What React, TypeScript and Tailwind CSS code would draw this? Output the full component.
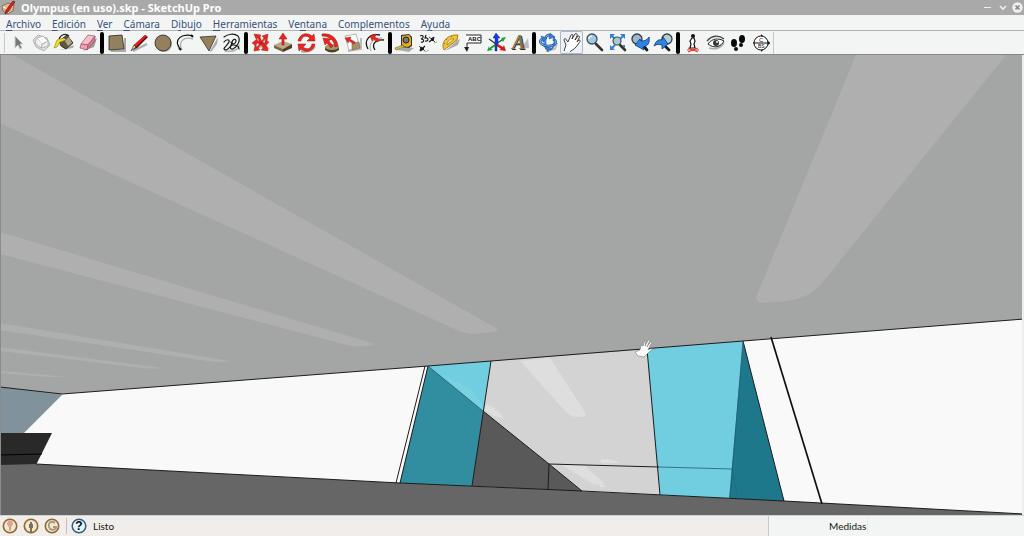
import { useState } from "react";
import type { ReactNode } from "react";
import clsx from "clsx";

interface Tool {
  name: string;
  icon: ReactNode;
}

interface MenuEntry {
  label: string;
  /** Index of the underlined access key, -1 for none */
  hotkey: number;
}

const MENUS: MenuEntry[] = [
  { label: "Archivo", hotkey: 0 },
  { label: "Edición", hotkey: 0 },
  { label: "Ver", hotkey: 0 },
  { label: "Cámara", hotkey: 0 },
  { label: "Dibujo", hotkey: 1 },
  { label: "Herramientas", hotkey: 0 },
  { label: "Ventana", hotkey: 2 },
  { label: "Complementos", hotkey: -1 },
  { label: "Ayuda", hotkey: 1 },
];

const TOOL_GROUPS: Tool[][] = [
  [
    {
      name: "Seleccionar",
      icon: <path d="M8 5v12l3-3 2 4 2-1-2-4h3z" fill="#777" stroke="#cfcfcf" />,
    },
    {
      name: "Crear componente",
      icon: (
        <g stroke="#b4b4b4" strokeLinejoin="round">
          <path d="M3 9l5-5 9 3 3 7-6 6-8-4z" fill="#dcdcdc" />
          <path d="M7 7l6-2 5 5-6 3z" fill="#fff" />
          <path d="M7 7l-2 5 6 5 1-4M11 17l7-2v-5" fill="#f2f2f2" />
        </g>
      ),
    },
    {
      name: "Pintar",
      icon: (
        <>
          <path d="M7 19l13-2 1-3-8 3z" fill="#aaa" />
          <path d="M6 10l8-6 6 8-7 6-5-3z" fill="#5d5745" stroke="#1c1a15" strokeWidth=".8" />
          <path d="M12 10l4-4 3 6-4 3z" fill="#b2a684" />
          <path d="M6 8C8 3 13 2 16 5" fill="none" stroke="#222" strokeWidth="1.2" />
          <path d="M11 7L4 9 1 17l3-1 3-5 6-2z" fill="#f4df1d" stroke="#8d7c10" strokeWidth=".6" />
        </>
      ),
    },
    {
      name: "Borrar",
      icon: (
        <g strokeLinejoin="round">
          <path d="M7 20l11-4 3-9-8 7z" fill="#9b9b9b" />
          <g stroke="#9c5263" strokeWidth=".7">
            <path d="M12 4l7 1-7 9-7-1z" fill="#f9bcc9" />
            <path d="M5 13l7 1-1 5-7-2z" fill="#f0a0b2" />
            <path d="M12 14l7-9v5l-8 9z" fill="#d4788c" />
          </g>
        </g>
      ),
    },
  ],
  [
    {
      name: "Rectángulo",
      icon: (
        <>
          <path d="M6 20h14V7" stroke="#aaa" fill="none" strokeWidth="2" />
          <path d="M4 5l13-1 2 14-15 1z" fill="#92805f" stroke="#2a241a" strokeWidth=".8" />
        </>
      ),
    },
    {
      name: "Línea",
      icon: (
        <>
          <path d="M5 20l14-7" stroke="#aaa" strokeWidth="2" />
          <path d="M4 19l2-5L17 4l3 2L9 17z" fill="#4a0d0a" />
          <path d="M6 14L17 4l2 1L8 16z" fill="#ea1f1a" />
          <path d="M3 20l3-6 2 2z" fill="#f1dcae" stroke="#222" strokeWidth=".6" />
        </>
      ),
    },
    {
      name: "Círculo",
      icon: (
        <>
          <circle cx="13" cy="13" r="8" fill="#aaa" />
          <circle cx="12" cy="12" r="8" fill="#92805f" stroke="#2a241a" strokeWidth=".8" />
        </>
      ),
    },
    {
      name: "Arco",
      icon: (
        <>
          <path d="M8 19C4 11 9 5 19 8" fill="none" stroke="#b0b0b0" strokeWidth="1.4" />
          <path d="M6 18C-1 8 8 2 19 5" fill="none" stroke="#111" strokeWidth="1.2" />
          <path d="M17 4l2 2M5 17l2 2" stroke="#111" strokeWidth="1.8" />
        </>
      ),
    },
    {
      name: "Polígono",
      icon: (
        <>
          <path d="M13 20L21 6l-1 7-6 8z" fill="#aaa" />
          <path d="M3 6l16-1-7 15z" fill="#92805f" stroke="#3c3324" strokeWidth=".8" />
        </>
      ),
    },
    {
      name: "A mano alzada",
      icon: (
        <g fill="none" strokeLinecap="round">
          <path d="M5 20c6 1 13 0 14-6" stroke="#b5b5b5" strokeWidth="1.6" />
          <path
            d="M4 6c4-3 10-4 14-1 3 4 0 10-5 13-4 1-3-4 0-4 4 0 6 2 6 4M4 11c2-3 6-3 5 0s-5 5-5 7c2 3 7-2 8-6 0-4 4-5 4-2s-4 4-5 1"
            stroke="#161616"
            strokeWidth="1.2"
          />
        </g>
      ),
    },
  ],
  [
    {
      name: "Mover",
      icon: (
        <>
          <path d="M5 19l8-4 7 3" stroke="#bbb" strokeWidth="2" fill="none" />
          <g fill="#ee241f" stroke="#8e1613" strokeWidth=".4">
            <path d="M3 12l5-4 1 2 3 1-1 2-3-1-1 3z" />
            <path d="M20 11l-4 5-1-2-4-1 1-2 4 1v-3z" />
            <path d="M5 3l7 1-1 2 2 5-2 1-2-5-2 1z" />
            <path d="M19 3l-6 2 2 2-3 4 1 1 3-4 2 2z" />
            <path d="M5 20l1-6 2 2 3-4 2 1-4 4 2 2z" />
            <path d="M19 20l-7-1 2-2-2-4 2-1 2 4 2-1z" />
          </g>
        </>
      ),
    },
    {
      name: "Empujar/tirar",
      icon: (
        <>
          <path d="M2 14l9-4 9 3-9 5z" fill="#bba886" />
          <path d="M2 14l9 4v3l-9-4z" fill="#7c6848" />
          <path d="M11 18l9-5v4l-9 4z" fill="#4b3d28" />
          <path d="M10 14V8H7l4-6 4 6h-3v6z" fill="#ee241f" stroke="#8e1613" strokeWidth=".5" />
        </>
      ),
    },
    {
      name: "Girar",
      icon: (
        <>
          <path d="M6 20c5 2 12 0 14-5" stroke="#aaa" strokeWidth="2" fill="none" />
          <path d="M3 10C5 2 12 1 17 5l2-2 1 7h-8l3-3C11 4 7 5 6 10z" fill="#ee241f" stroke="#8e1613" strokeWidth=".5" />
          <path d="M20 13c-2 8-9 9-14 5l-2 2-1-7h8l-3 3c4 3 8 2 9-3z" fill="#ee241f" stroke="#8e1613" strokeWidth=".5" />
        </>
      ),
    },
    {
      name: "Sígueme",
      icon: (
        <>
          <path d="M7 16h14v3q-7 5-14 0z" fill="#4f4028" />
          <ellipse cx="14" cy="16" rx="7" ry="3" fill="#a8946d" />
          <path d="M4 3c9-1 15 4 16 12l-3 1C16 9 11 5 4 5z" fill="#ee241f" stroke="#8e1613" strokeWidth=".5" />
          <path d="M5 7l8 1-2 2 4 5-2 2-4-5-2 2z" fill="#ee241f" stroke="#8e1613" strokeWidth=".5" />
        </>
      ),
    },
    {
      name: "Escala",
      icon: (
        <>
          <path d="M7 20l13-2V7" fill="none" stroke="#bbb" strokeWidth="2" />
          <path d="M4 5l11-2 4 14-11 2z" fill="#fff" stroke="#999" strokeWidth=".7" />
          <path d="M11 12l7-1 1 6-8 2z" fill="#a59069" stroke="#7b6b4b" strokeWidth=".6" />
          <path d="M4 7l6-1-1 2 5 3-1 2-5-3-1 2z" fill="#ee241f" stroke="#8e1613" strokeWidth=".4" />
        </>
      ),
    },
    {
      name: "Equidistancia",
      icon: (
        <>
          <path d="M7 20C4 13 9 7 18 7" fill="none" stroke="#b5b5b5" strokeWidth="1.3" />
          <g fill="none" stroke="#141414" strokeWidth="1.3">
            <path d="M4 18C-1 9 6 2 16 4" />
            <path d="M11 19C7 13 12 8 20 9" />
          </g>
          <path d="M6 5l6-2-1 3 5 3-2 2-5-3-1 2z" fill="#ee241f" stroke="#8e1613" strokeWidth=".4" />
        </>
      ),
    },
  ],
  [
    {
      name: "Medir",
      icon: (
        <>
          <path d="M4 19l8-3 9 1-5 4z" fill="#aaa" />
          <path d="M8 4l8-1 3 3v9l-3 2-8-1z" fill="#333" />
          <path d="M9 5l7-1 2 3v7l-3 2-6-1z" fill="#e1ac1c" />
          <circle cx="13" cy="9" r="3" fill="#777" stroke="#222" />
          <path d="M10 14l-8 3 1 2 8-3z" fill="#e5c51c" stroke="#555" strokeWidth=".6" />
        </>
      ),
    },
    {
      name: "Acotación",
      icon: (
        <g stroke="#151515" fill="none">
          <path d="M3 15l6 5M13 6l6 5" strokeWidth=".8" />
          <path d="M6 18l3-3M13 11l4-3" strokeWidth="1.2" />
          <path d="M4 20l1-4 3 2zM18 6l-1 4-2-2z" fill="#151515" />
          <path d="M4 5c4-2 4 2 1 3 4 0 3 4 0 3M10 4l-1 3c4-1 4 4 0 3" strokeWidth="1.1" />
          <path d="M9 21l4-2M18 12l3-1" stroke="#aaa" />
        </g>
      ),
    },
    {
      name: "Transportador",
      icon: (
        <>
          <path d="M6 20l13-6 2-6-2 1z" fill="#aaa" />
          <path d="M5 19C1 11 9 3 19 4l-1 5z" fill="#f4c330" stroke="#8f6a10" strokeWidth=".8" />
          <path d="M8 14c0-4 4-7 7-6z" fill="#fbf3d3" stroke="#8f6a10" strokeWidth=".7" />
          <path d="M7 8l1 1M12 5l1 1M5 12l1 1" stroke="#77560b" strokeWidth=".7" />
        </>
      ),
    },
    {
      name: "Texto",
      icon: (
        <>
          <path d="M4 4h15v8H5v7" fill="#fff" stroke="#222" />
          <path d="M2 16l3 5 2-5z" fill="#222" />
          <text x="6" y="10" fontSize="6" fontWeight="700" fontFamily="Liberation Sans, sans-serif" fill="#111">ABC</text>
        </>
      ),
    },
    {
      name: "Ejes",
      icon: (
        <>
          <path d="M4 8l7 5 6-4" stroke="#333" strokeWidth="1.2" fill="none" />
          <path d="M10 13l-6 4v-2l-2 5 6-1-2-1 6-4zM13 12l4-3 1 2 3-5-5 1 1 1-5 4z" fill="#18a332" />
          <path d="M11 12l7 4 1-2 2 6-7-1 2-1-6-4z" fill="#db1a18" />
          <path d="M10 14V7H8l3-5 4 5h-2v7zM10 15h2v5h-2z" fill="#1a38e0" stroke="#101a66" strokeWidth=".4" />
        </>
      ),
    },
    {
      name: "Texto 3D",
      icon: (
        <>
          <path d="M13 18l7-11 1 10z" fill="#bbb" />
          <text x="5" y="19" fontSize="20" fontWeight="700" fontStyle="italic" fontFamily="Liberation Serif, serif" fill="#2d261b">A</text>
          <text x="4" y="18" fontSize="20" fontWeight="700" fontStyle="italic" fontFamily="Liberation Serif, serif" fill="#85734f">A</text>
        </>
      ),
    },
  ],
  [
    {
      name: "Orbitar",
      icon: (
        <>
          <path d="M9 20l9-2 2-6" stroke="#bbb" strokeWidth="2" fill="none" />
          <g fill="none">
            <path d="M14 5C8 1 6 12 10 18" stroke="#1a427d" strokeWidth="2.6" />
            <path d="M14 5C8 1 6 12 10 18" stroke="#6aaef5" strokeWidth="1.4" />
            <path d="M16 8c6 3 1 8-6 7-7-1-9-6-4-7" stroke="#1a427d" strokeWidth="2.6" />
            <path d="M16 8c6 3 1 8-6 7-7-1-9-6-4-7" stroke="#6aaef5" strokeWidth="1.4" />
            <path d="M13 19c4-2 5-7 4-13" stroke="#2f6fc4" strokeWidth="1.6" />
          </g>
          <path d="M13 2l5 4-6 2zM4 5l6 2-4 4zM8 15l6 2-3 4z" fill="#2f7ee6" stroke="#173b70" strokeWidth=".4" />
        </>
      ),
    },
    {
      name: "Desplazar",
      icon: (
        <path
          d="M4 20l2-6-2-5c0-2 2-2 3 1l1 1 3-7c1-1 2-1 2 1l-1 3 3-5c1-1 3 0 2 2l-2 4 3-4c2 0 2 1 1 2l-2 4 2-2c2 0 1 2 0 3l-3 4c-2 3-5 3-6 5"
          fill="#fff"
          stroke="#2b2b2b"
          strokeWidth=".9"
          strokeLinejoin="round"
        />
      ),
    },
    {
      name: "Zoom",
      icon: (
        <>
          <path d="M13 13l6 6" stroke="#333" strokeWidth="2.6" strokeLinecap="round" />
          <circle cx="9" cy="8" r="5" fill="#a1c8e4" stroke="#404e5a" strokeWidth="1.3" />
          <path d="M6 8c0-2 1-3 3-3" stroke="#e6f5ff" fill="none" strokeWidth="1.4" />
        </>
      ),
    },
    {
      name: "Ver modelo completo",
      icon: (
        <>
          <path d="M4 3h5L4 8zM14 3h5v5zM4 14v5h5zM19 14v3l-3-3z" fill="#337ee0" />
          <path d="M6 5l3 3M17 5l-3 3M6 17l3-3" stroke="#337ee0" strokeWidth="1.8" />
          <path d="M14 14l5 5" stroke="#333" strokeWidth="2.6" strokeLinecap="round" />
          <circle cx="11" cy="10" r="4" fill="#a9c9d4" stroke="#414d55" strokeWidth="1.2" />
        </>
      ),
    },
    {
      name: "Anterior",
      icon: (
        <>
          <path d="M13 13l5 6" stroke="#1d1d1d" strokeWidth="2.8" strokeLinecap="round" />
          <circle cx="8" cy="8" r="5" fill="#9db9c8" stroke="#333e48" strokeWidth="1.3" />
          <path d="M6 14l5-6 1 2c4 0 6-1 8-4 1 6-1 9-6 10l1 3z" fill="#2f83e6" stroke="#0d346f" strokeWidth=".8" />
        </>
      ),
    },
    {
      name: "Siguiente",
      icon: (
        <>
          <path d="M11 13l6 6" stroke="#1d1d1d" strokeWidth="2.8" strokeLinecap="round" />
          <circle cx="15" cy="8" r="5" fill="#b3cfd4" stroke="#333e48" strokeWidth="1.3" />
          <path d="M16 13l-5-7-1 3C6 8 4 10 2 15c3-2 5-2 8-1v4z" fill="#2f83e6" stroke="#0d346f" strokeWidth=".8" />
        </>
      ),
    },
  ],
  [
    {
      name: "Situar cámara",
      icon: (
        <>
          <path d="M7 17l10 4M17 17L7 21M6 19h12" stroke="#e3302b" />
          <path d="M9 17l1-4-1-3 2-3h2l1 3-1 3 1 4z" fill="#fff" stroke="#111" strokeWidth="1.2" />
          <ellipse cx="12" cy="5" rx="2" ry="2" fill="#111" />
        </>
      ),
    },
    {
      name: "Girar cámara",
      icon: (
        <>
          <path d="M5 17c6 2 12 0 15-5" stroke="#aaa" fill="none" strokeWidth="1.6" />
          <path d="M4 13c4-6 11-6 16-3-3 6-10 8-16 3z" fill="#fff" stroke="#1f1f1f" />
          <path d="M3 10c5-6 12-6 17-2" stroke="#444" fill="none" strokeWidth="1.3" />
          <circle cx="12" cy="12" r="3" fill="#333" />
          <circle cx="13" cy="11" r="1" fill="#fff" />
        </>
      ),
    },
    {
      name: "Caminar",
      icon: (
        <g fill="#080808">
          <ellipse cx="7" cy="12" rx="3" ry="4" />
          <ellipse cx="9" cy="18" rx="2" ry="2" />
          <ellipse cx="15" cy="8" rx="3" ry="4" />
          <ellipse cx="14" cy="14" rx="2" ry="2" />
        </g>
      ),
    },
    {
      name: "Plano de sección",
      icon: (
        <>
          <path d="M11 3l9 9-9 9z" fill="#111" />
          <circle cx="11" cy="12" r="7" fill="#fff" stroke="#111" />
          <path d="M3 12h17" stroke="#111" />
          <text x="9" y="11" fontSize="6" fontFamily="Liberation Sans, sans-serif" fill="#111">C</text>
          <text x="8" y="17" fontSize="5" fontFamily="Liberation Sans, sans-serif" fill="#111">BS</text>
        </>
      ),
    },
  ],
];

function TitleBar() {
  return (
    <header className="flex h-[15px] items-center bg-[#a9a9a9] px-px text-[11px] leading-4 font-bold text-white">
      <svg className="mr-1 size-4" viewBox="0 0 16 16" aria-hidden="true">
        <path d="M1 6l6-3 6 2-1 6-6 3-4-3z" fill="#e8b58c" stroke="#8c4a2c" strokeWidth=".7" />
        <path d="M2 7l5 2 5-3M7 9v4" stroke="#fff" fill="none" />
        <path d="M4 14l1-4 7-9 2 1-7 10z" fill="#c92a1c" stroke="#561009" strokeWidth=".6" />
      </svg>
      <h1 className="flex-1">Olympus (en uso).skp - SketchUp Pro</h1>
      <div className="flex items-center gap-1">
        <button aria-label="Minimizar" className="size-[11px]">
          <svg viewBox="0 0 11 11"><path d="M2 5.5h7" stroke="#eee" /></svg>
        </button>
        <button aria-label="Maximizar" className="size-[11px]">
          <svg viewBox="0 0 11 11"><path d="M3 4l3 3 3-3" fill="none" stroke="#eee" strokeWidth="1.6" /></svg>
        </button>
        <button aria-label="Cerrar" className="size-[11px]">
          <svg viewBox="0 0 11 11">
            <circle cx="5.5" cy="5.5" r="5.2" fill="#eee" />
            <path d="M3.5 3.5l4 4M7.5 3.5l-4 4" stroke="#8a8a8a" strokeWidth="1.6" />
          </svg>
        </button>
      </div>
    </header>
  );
}

function MenuBar() {
  return (
    <nav className="flex h-4 items-center gap-[11px] border-b border-[#b2b4b3] bg-[#f3f5f4] px-1.5 pt-0.5 text-[10px] leading-[14px] text-[#37507a]">
      {MENUS.map(({ label, hotkey }) => (
        <button key={label}>
          {hotkey < 0 ? label : (
            <>
              {label.slice(0, hotkey)}
              <span className="underline underline-offset-2">{label[hotkey]}</span>
              {label.slice(hotkey + 1)}
            </>
          )}
        </button>
      ))}
    </nav>
  );
}

function Toolbar({ active, onSelect }: { active: string; onSelect: (name: string) => void }) {
  return (
    <div role="toolbar" className="flex h-6 items-center border-b border-[#858786] bg-[#f3f5f4] pl-1">
      <div className="mr-0.5 h-5 w-px bg-[#c6c8c7]" />
      {TOOL_GROUPS.map((group, i) => (
        <div key={group[0].name} className="flex items-center">
          {i > 0 && <div className="mx-px h-[22px] w-1 rounded-sm bg-black" />}
          {group.map((tool) => (
            <button
              key={tool.name}
              aria-label={tool.name}
              onClick={() => onSelect(tool.name)}
              className={clsx(
                "size-[23px]",
                tool.name === active && "rounded-xs bg-[#eef2f6] inset-ring inset-ring-[#a9bac9]",
              )}
            >
              <svg className="size-full" viewBox="0 0 23 23">{tool.icon}</svg>
            </button>
          ))}
        </div>
      ))}
      <div className="h-[22px] w-px bg-[#c6c8c7]" />
    </div>
  );
}

function Viewport() {
  return (
    <main className="min-h-0 flex-1 border-r-2 border-l border-r-[#eceeed] border-l-[#8a8c8b] bg-[#a4a6a5]">
      <svg className="block size-full" viewBox="1 55 1021 460" preserveAspectRatio="none" role="img" aria-label="Modelo">
        {/* Ceiling and its light reflections */}
        <path d="M0 55h1024v460H0z" fill="#a4a6a5" />
        <g fill="#afafaf">
          <path d="M0 55h13L496 328q4 3-3 4l-20 2q-8 0-16-4L0 123z" />
          <path d="M0 232l375 112q-4 3-24 2L0 254z" />
          <path d="M0 323l230 38q-8 2-22 0L0 330z" />
          <path d="M0 347l163 21q-8 1-20 0L0 351z" />
          <path d="M0 371l68 6H48L0 373z" />
          <path d="M856 55h150L822 283q-10 14-35 18l-23 2q-10-1-7-8z" />
        </g>

        {/* Left wall, sky and furniture */}
        <path d="M62 394l366-28-28 118L20 466v-33z" fill="#f9f9f9" />
        <path d="M0 387l62 8-38 38H0z" fill="#80939d" />
        <path d="M0 433h52l-16 32H0z" fill="#292929" />
        <path d="M0 455l42-1" stroke="#000" />

        {/* Back room */}
        <path d="M491 361l252-19 42 160-313-16z" fill="#d3d3d3" />
        <g fill="#dedede">
          <path d="M520 361l30-3 35 54q3 5-5 5-8 1-14-5z" />
          <path d="M487 404q10 5 17 14-6 1-12-3l-8-5z" />
          <path d="M562 465h22l20 18q-4 3-11 1z" />
          <path d="M600 460q9-3 20 3h-18z" />
          <path d="M600 481l6 6h-6z" />
        </g>
        <path d="M483 411l66 53 34 28-111-6z" fill="#595959" />

        {/* Glass panes */}
        <path d="M428 366l63-5-8 50z" fill="#70cee0" />
        <path d="M441 374l29 14 14 19-1 4z" fill="#79d1e2" />
        <path d="M428 366l55 45-11 76-72-4z" fill="#318da0" />
        <path d="M647 349l96-8-13 158-70-4z" fill="#70cee0" />
        <path d="M743 341l42 161-56-3z" fill="#1d788c" />

        {/* Right wall */}
        <path d="M743 341l281-22v196L784 501z" fill="#f9f9f9" />
        <path d="M0 465l36-1 364 19 384 18 238 13v2H0z" fill="#666" />

        <g fill="none" stroke="#1c1c1c" strokeWidth="1">
          <path d="M0 387l62 7 366-28 315-25 281-22" />
          <path d="M36 464l364 19 182 8 202 10 240 13" />
          <path d="M425 366l-29 117M428 366l-28 117M491 361l-19 125" />
          <path d="M483 411l66 53 33 27M549 464l-1 26M647 349l13 146M743 341l41 160" />
          <path d="M549 464l110 3" />
        </g>
        <g fill="none" stroke="#235e69">
          <path d="M659 467l73 2M743 341l-13 158M428 366l55 45" strokeWidth=".8" />
          <path d="M732 469l6 30" strokeWidth=".4" />
        </g>
        <path d="M771 337l51 167" stroke="#111" strokeWidth="1.7" />

        {/* Pan cursor */}
        <path
          d="M635 352l5-2 1-5 2 1 2-6 1 1-1 5 4-7 1 1-3 7 4-6 1 1-4 8q3-2 5-1l-4 3-5 5-6-1z"
          fill="#fff"
          stroke="#777"
          strokeWidth=".6"
        />
      </svg>
    </main>
  );
}

const RING_ICONS: Tool[] = [
  {
    name: "Geolocalización",
    icon: <path d="M8 13L7 8C4 6 6 3 8 3s4 3 1 5z" fill="#e3a39b" stroke="#c77f74" strokeWidth=".6" />,
  },
  {
    name: "Créditos",
    icon: <path d="M7 4h2v2h1v4H9v4H7v-4H6V6h1z" fill="#77736a" />,
  },
  {
    name: "Iniciar sesión",
    icon: <path d="M11 5C7 2 4 5 5 9c1 3 5 4 7 1V9H9" fill="none" stroke="#a3997f" strokeWidth="1.8" />,
  },
];

function StatusBar() {
  return (
    <footer className="flex h-[21px] items-center border-t border-[#cfd1d0] bg-[#f0edeb] font-['Lato',sans-serif] text-[10px] leading-4 text-[#161616]">
      <div className="flex flex-1 items-center pl-0.5">
        <div className="flex gap-[5px]">
          {RING_ICONS.map((item) => (
            <button key={item.name} aria-label={item.name} className="size-4">
              <svg viewBox="0 0 16 16">
                <circle cx="8" cy="8" r="6.7" fill="#f1e8d0" stroke="#93662c" strokeWidth="1.6" />
                {item.icon}
              </svg>
            </button>
          ))}
        </div>
        <div className="mr-1 ml-1.5 h-4 w-px bg-[#c3c1bf]" />
        <button aria-label="Ayuda" className="mr-1 size-4">
          <svg viewBox="0 0 16 16">
            <circle cx="8" cy="8" r="6.8" fill="#e9f4fa" stroke="#315f7c" strokeWidth="1.5" />
            <text x="8" y="12" textAnchor="middle" fontSize="12" fontWeight="700" fontFamily="Liberation Sans, sans-serif" fill="#0b0b0b">?</text>
          </svg>
        </button>
        <span className="ml-0.5">Listo</span>
      </div>
      <div className="flex h-full w-1/4 items-center border-l border-[#c9c9c7] bg-[#f3f5f4]">
        <label htmlFor="measure" className="ml-[60px]">Medidas</label>
        <input id="measure" className="ml-px h-4 min-w-0 flex-1 border-l border-[#e6e8e7] bg-transparent outline-none" />
      </div>
    </footer>
  );
}

export default function App() {
  const [activeTool, setActiveTool] = useState("Desplazar");

  return (
    <div className="flex h-screen flex-col bg-[#f3f5f4] font-['Noto_Sans',sans-serif]">
      <TitleBar />
      <MenuBar />
      <Toolbar active={activeTool} onSelect={setActiveTool} />
      <Viewport />
      <StatusBar />
    </div>
  );
}
